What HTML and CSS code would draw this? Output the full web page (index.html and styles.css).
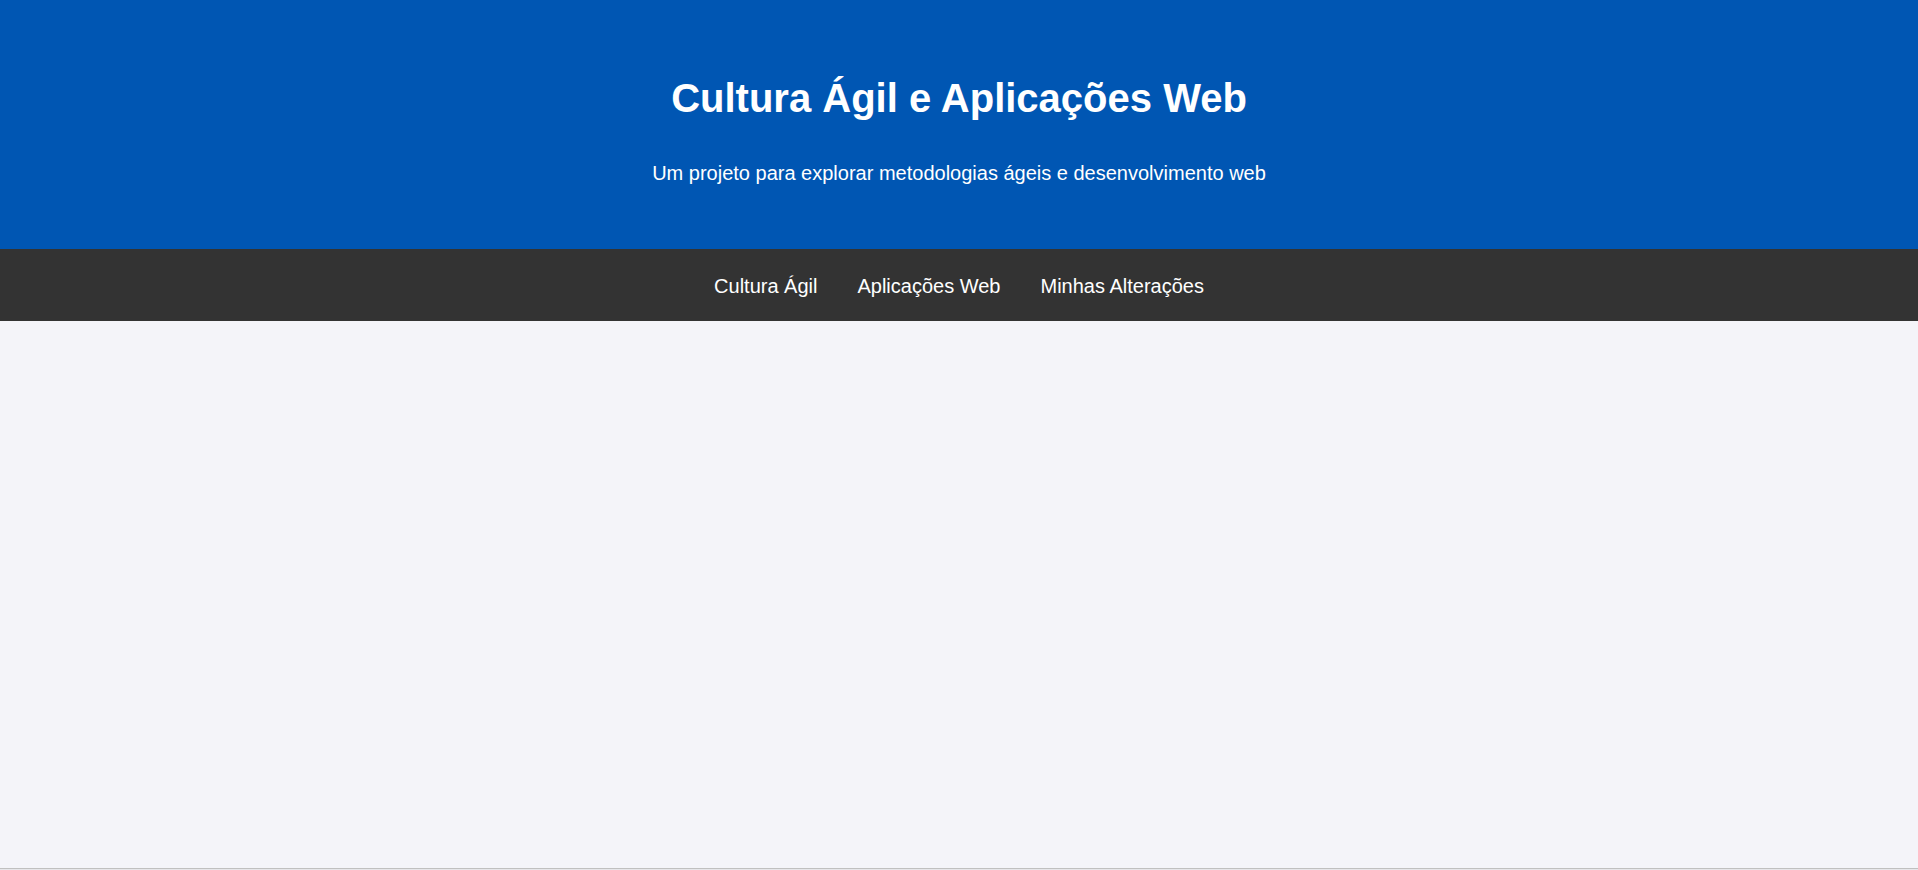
FILE: index.html
```html
<!DOCTYPE html>
<html lang="pt-BR">
<head>
<meta charset="utf-8">
<title>Cultura Ágil e Aplicações Web</title>
<link rel="stylesheet" href="styles.css">
</head>
<body>
<header class="site-header">
  <h1 class="site-title">Cultura Ágil e Aplicações Web</h1>
  <p class="site-subtitle">Um projeto para explorar metodologias ágeis e desenvolvimento web</p>
</header>
<nav class="site-nav">
  <a class="nav-link" href="#cultura">Cultura Ágil</a>
  <a class="nav-link" href="#aplicacoes">Aplicações Web</a>
  <a class="nav-link" href="#alteracoes">Minhas Alterações</a>
</nav>
<main class="site-main"></main>
<footer class="site-footer"></footer>
</body>
</html>
```

FILE: styles.css
```css
html, body {
  margin: 0;
  padding: 0;
}
body {
  font-family: "Liberation Sans", Arial, sans-serif;
  background: #f4f4f9;
  color: #333;
}
.site-header {
  background: #0056b3;
  color: #fff;
  text-align: center;
  padding: 75px 20px 64px;
  height: 249px;
  box-sizing: border-box;
}
.site-title {
  margin: 0;
  font-size: 40px;
  line-height: 46px;
  font-weight: bold;
}
.site-subtitle {
  margin: 40px 0 0;
  font-size: 20px;
  line-height: 24px;
}
.site-nav {
  background: #333;
  display: flex;
  justify-content: center;
  gap: 40px;
  padding: 25px 0 23px;
  height: 72px;
  box-sizing: border-box;
}
.nav-link {
  color: #fff;
  text-decoration: none;
  font-size: 20px;
  line-height: 24px;
}
.site-main {
  height: 547px;
}
.site-footer {
  border-top: 1px solid #c0c0c0;
  background: #e6e6ea;
  height: 40px;
}
```
